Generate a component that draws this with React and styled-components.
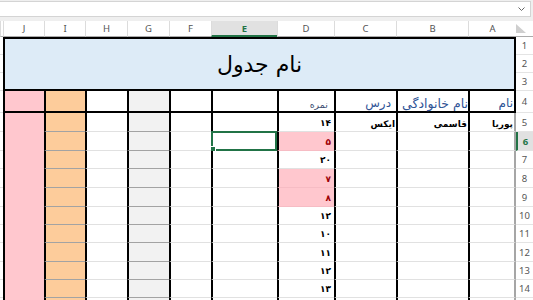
import React from "react";
import styled, { createGlobalStyle } from "styled-components";

const GlobalStyle = createGlobalStyle`
  html, body { margin: 0; padding: 0; background: #fff; overflow: hidden; }
`;

const Window = styled.div`
  width: 533px;
  height: 300px;
  overflow: hidden;
  display: flex;
  flex-direction: column;
  background: #fff;
`;

const FormulaArea = styled.div`
  height: 21px;
  flex: none;
  box-sizing: border-box;
  background: #efefef;
  padding: 1px 2px 4px 0;
  display: flex;
`;

const FormulaBox = styled.div`
  flex: 1;
  background: #fff;
  border: 1px solid #d4d4d4;
  border-left: none;
  display: flex;
  align-items: center;
  justify-content: flex-end;
  padding-right: 5px;
`;

const Sheet = styled.div`
  direction: rtl;
  flex: 1;
  overflow: hidden;
  display: grid;
  grid-template-columns: 17px 48px 72px 62px 57px 66px 42px 42px 42px 41px 41px 1fr;
  grid-template-rows: 16px 18px 18px 18px 22px 19px 19px 18px 19px 19px 18px 18px 19px 18px 18px 20px;
`;

const Corner = styled.div`
  display: flex;
  align-items: flex-end;
  justify-content: flex-end;
  padding: 0 2px 3px 0;
  box-sizing: border-box;
  border-bottom: 1px solid #ababab;
`;

const ColHead = styled.div`
  display: flex;
  align-items: center;
  justify-content: center;
  box-sizing: border-box;
  font-family: "Noto Sans", sans-serif;
  font-size: 9.5px;
  color: ${p => (p.$active ? "#217346" : "#555")};
  font-weight: ${p => (p.$active ? 700 : 400)};
  background: ${p => (p.$active ? "#e1e1e1" : "#fff")};
  border-left: 1px solid #dcdcdc;
  border-bottom: ${p => (p.$active ? "2px solid #217346" : "1px solid #ababab")};
`;

const RowHead = styled.div`
  display: flex;
  align-items: center;
  justify-content: center;
  box-sizing: border-box;
  font-family: "Noto Sans", sans-serif;
  font-size: 9.5px;
  color: ${p => (p.$active ? "#217346" : "#555")};
  font-weight: ${p => (p.$active ? 700 : 400)};
  background: ${p => (p.$active ? "#e1e1e1" : "#fff")};
  border-left: ${p => (p.$active ? "2px solid #217346" : "none")};
  border-bottom: 1px solid #e4e4e4;
`;

const Title = styled.div`
  grid-column: 2 / span 10;
  grid-row: 2 / span 3;
  box-sizing: border-box;
  background: #ddebf7;
  border: 2px solid #000;
  display: flex;
  align-items: center;
  justify-content: center;
  font-family: "DejaVu Sans", sans-serif;
  font-size: 22px;
  color: #000;
`;

const Cell = styled.div`
  position: relative;
  box-sizing: border-box;
  min-width: 0;
  display: flex;
  align-items: flex-end;
  justify-content: flex-start;
  padding: 0 ${p => p.$pad ?? 2}px ${p => p.$low ?? 2}px 0;
  background: ${p => p.$bg || "#fff"};
  border-left: ${p => (p.$edge ? "none" : "2px solid #000")};
  border-right: ${p => p.$right || "none"};
  border-bottom: ${p => p.$bottom || "1px solid #e1e1e1"};
  font-family: "DejaVu Sans", sans-serif;
  font-size: ${p => p.$size || 10}px;
  font-weight: ${p => (p.$bold ? 700 : 400)};
  color: ${p => p.$color || "#000"};
  white-space: nowrap;
  line-height: 1;
`;

const MergedJ = styled(Cell)`
  grid-column: 11;
  grid-row: 6 / 17;
`;

const Selection = styled.div`
  position: absolute;
  top: -1px;
  left: -2px;
  right: 0;
  bottom: -1px;
  border: 2px solid #217346;
  pointer-events: none;
`;

const Handle = styled.div`
  position: absolute;
  left: -4px;
  bottom: -4px;
  width: 5px;
  height: 5px;
  background: #217346;
  border: 1px solid #fff;
`;

const PINK = "#ffc7ce";
const ORANGE = "#fdcc9b";
const GREY = "#f2f2f2";
const HEAD_BLUE = "#2f5496";

const letters = ["A", "B", "C", "D", "E", "F", "G", "H", "I", "J", ""];

const body = [
  { n: 5, A: "پوریا", B: "قاسمی", C: "ایکس", D: "۱۴" },
  { n: 6, D: "۵", bad: true, sel: true },
  { n: 7, D: "۲۰" },
  { n: 8, D: "۷", bad: true },
  { n: 9, D: "۸", bad: true },
  { n: 10, D: "۱۲" },
  { n: 11, D: "۱۰" },
  { n: 12, D: "۱۱" },
  { n: 13, D: "۱۲" },
  { n: 14, D: "۱۳" },
  { n: 15, hidden: true },
];

const Chevron = () => (
  <svg width="7" height="4" viewBox="0 0 7 4">
    <path d="M0.5 0.5 L3.5 3.5 L6.5 0.5" fill="none" stroke="#666" strokeWidth="1" />
  </svg>
);

const SelectAll = () => (
  <svg width="10" height="9" viewBox="0 0 10 9">
    <polygon points="0,0 0,9 10,9" fill="#cfcfcf" />
  </svg>
);

function HeaderRow() {
  const thick = "2px solid #000";
  return (
    <>
      <RowHead>4</RowHead>
      <Cell $bottom={thick} $right={thick} $size={12} $color={HEAD_BLUE} $pad={1} $low={2}>نام</Cell>
      <Cell $bottom={thick} $size={12.5} $color={HEAD_BLUE} $pad={0} $low={1}>نام خانوادگی</Cell>
      <Cell $bottom={thick} $size={12} $color={HEAD_BLUE} $pad={5} $low={2}>درس</Cell>
      <Cell $bottom={thick} $size={9.5} $color="#3d4f73" $pad={6} $low={2}>نمره</Cell>
      <Cell $bottom={thick} />
      <Cell $bottom={thick} />
      <Cell $bottom={thick} $bg={GREY} />
      <Cell $bottom={thick} />
      <Cell $bottom={thick} $bg={ORANGE} />
      <Cell $bottom={thick} $bg={PINK} />
      <Cell $edge />
    </>
  );
}

function BodyRow({ row }) {
  const boxLine = "1px solid #a3a3a3";
  return (
    <>
      <RowHead $active={row.sel}>{row.hidden ? "" : row.n}</RowHead>
      <Cell $right="2px solid #a6a6a6" $bold $size={9} $pad={1}>{row.A}</Cell>
      <Cell $bold $size={9} $pad={1}>{row.B}</Cell>
      <Cell $bold $size={9} $pad={1}>{row.C}</Cell>
      <Cell
        $bold
        $size={9}
        $pad={3}
        $low={3}
        $bg={row.bad ? PINK : undefined}
        $color={row.bad ? "#9c0006" : "#000"}
        $bottom={row.bad ? "1px solid #f6bcc4" : undefined}
      >
        {row.D}
      </Cell>
      <Cell>
        {row.sel && (
          <Selection>
            <Handle />
          </Selection>
        )}
      </Cell>
      <Cell />
      <Cell $bg={GREY} $bottom={boxLine} />
      <Cell />
      <Cell $bg={ORANGE} $bottom={boxLine} />
      <Cell $edge />
    </>
  );
}

export default function App() {
  return (
    <Window>
      <GlobalStyle />
      <FormulaArea>
        <FormulaBox>
          <Chevron />
        </FormulaBox>
      </FormulaArea>
      <Sheet>
        <Corner>
          <SelectAll />
        </Corner>
        {letters.map((l, i) => (
          <ColHead key={i} $active={l === "E"}>{l}</ColHead>
        ))}

        <Title>نام جدول</Title>
        {[1, 2, 3].map(n => (
          <React.Fragment key={n}>
            <RowHead>{n}</RowHead>
            <Cell $edge />
          </React.Fragment>
        ))}

        <HeaderRow />

        <MergedJ $bg={PINK} $bottom="none" />
        {body.map(row => (
          <BodyRow key={row.n} row={row} />
        ))}
      </Sheet>
    </Window>
  );
}
